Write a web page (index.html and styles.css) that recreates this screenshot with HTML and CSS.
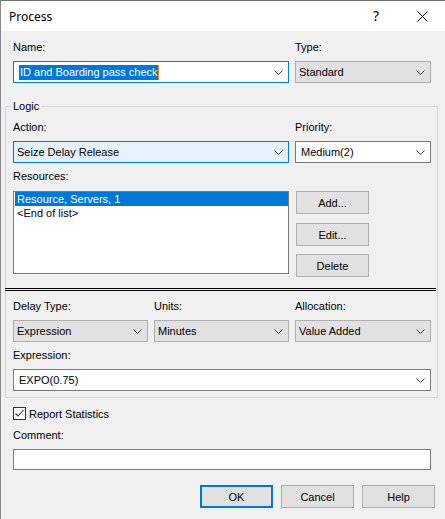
FILE: index.html
```html
<!DOCTYPE html>
<html>
<head>
<meta charset="utf-8">
<title>Process</title>
<link rel="stylesheet" href="styles.css">
</head>
<body>
<div class="window">
  <div class="titlebar">
    <span class="title">Process</span>
    <span class="tbtn help">?</span>
    <span class="tbtn close">
      <svg width="11" height="11" viewBox="0 0 11 11"><path d="M0.5 0.5 L10.5 10.5 M10.5 0.5 L0.5 10.5" stroke="#000" stroke-width="1" fill="none"/></svg>
    </span>
  </div>

  <div class="content">
    <div class="row2">
      <div class="field">
        <span class="lbl">Name:</span>
        <div class="combo focus edit">
          <span class="txt"><span class="sel">ID and Boarding pass check</span><span class="caret"></span></span>
          <svg class="chev" width="9" height="5" viewBox="0 0 9 5"><polyline points="0.5,0.5 4.5,4.5 8.5,0.5" fill="none" stroke="#404040" stroke-width="1"/></svg>
        </div>
      </div>
      <div class="field">
        <span class="lbl">Type:</span>
        <div class="combo ro">
          <span class="txt">Standard</span>
          <svg class="chev" width="9" height="5" viewBox="0 0 9 5"><polyline points="0.5,0.5 4.5,4.5 8.5,0.5" fill="none" stroke="#404040" stroke-width="1"/></svg>
        </div>
      </div>
    </div>

    <fieldset class="group">
      <legend>Logic</legend>
      <div class="row2">
        <div class="field">
          <span class="lbl">Action:</span>
          <div class="combo ro hot">
            <span class="txt">Seize Delay Release</span>
            <svg class="chev" width="9" height="5" viewBox="0 0 9 5"><polyline points="0.5,0.5 4.5,4.5 8.5,0.5" fill="none" stroke="#404040" stroke-width="1"/></svg>
          </div>
        </div>
        <div class="field">
          <span class="lbl">Priority:</span>
          <div class="combo edit">
            <span class="txt">Medium(2)</span>
            <svg class="chev" width="9" height="5" viewBox="0 0 9 5"><polyline points="0.5,0.5 4.5,4.5 8.5,0.5" fill="none" stroke="#404040" stroke-width="1"/></svg>
          </div>
        </div>
      </div>

      <div class="field res">
        <span class="lbl lbl-list">Resources:</span>
        <div class="resrow">
          <div class="list">
            <div class="item selected">Resource, Servers, 1</div>
            <div class="item">&lt;End of list&gt;</div>
          </div>
          <div class="sidebtns">
            <button class="btn">Add...</button>
            <button class="btn b-edit">Edit...</button>
            <button class="btn b-del">Delete</button>
          </div>
        </div>
      </div>

      <div class="dbl"></div>

      <div class="row3">
        <div class="field">
          <span class="lbl">Delay Type:</span>
          <div class="combo ro">
            <span class="txt">Expression</span>
            <svg class="chev" width="9" height="5" viewBox="0 0 9 5"><polyline points="0.5,0.5 4.5,4.5 8.5,0.5" fill="none" stroke="#404040" stroke-width="1"/></svg>
          </div>
        </div>
        <div class="field">
          <span class="lbl">Units:</span>
          <div class="combo ro">
            <span class="txt">Minutes</span>
            <svg class="chev" width="9" height="5" viewBox="0 0 9 5"><polyline points="0.5,0.5 4.5,4.5 8.5,0.5" fill="none" stroke="#404040" stroke-width="1"/></svg>
          </div>
        </div>
        <div class="field">
          <span class="lbl">Allocation:</span>
          <div class="combo ro">
            <span class="txt">Value Added</span>
            <svg class="chev" width="9" height="5" viewBox="0 0 9 5"><polyline points="0.5,0.5 4.5,4.5 8.5,0.5" fill="none" stroke="#404040" stroke-width="1"/></svg>
          </div>
        </div>
      </div>

      <div class="field expr">
        <span class="lbl">Expression:</span>
        <div class="combo edit">
          <span class="txt">EXPO(0.75)</span>
          <svg class="chev" width="9" height="5" viewBox="0 0 9 5"><polyline points="0.5,0.5 4.5,4.5 8.5,0.5" fill="none" stroke="#404040" stroke-width="1"/></svg>
        </div>
      </div>
    </fieldset>

    <label class="check">
      <svg class="cbox" width="13" height="13" viewBox="0 0 13 13"><rect x="0.5" y="0.5" width="12" height="12" fill="#fff" stroke="#333"/><polyline points="2.5,6.5 5,9 10.5,3" fill="none" stroke="#333" stroke-width="1.1"/></svg>
      <span>Report Statistics</span>
    </label>

    <div class="field comment">
      <span class="lbl">Comment:</span>
      <div class="textbox"></div>
    </div>

    <div class="footer">
      <button class="btn default">OK</button>
      <button class="btn">Cancel</button>
      <button class="btn">Help</button>
    </div>
  </div>
</div>
</body>
</html>
```

FILE: styles.css
```css
* { box-sizing: border-box; }

html, body {
  margin: 0;
  padding: 0;
}

body {
  width: 445px;
  height: 519px;
  overflow: hidden;
  background: #f0f0f0;
  font-family: "Liberation Sans", Arial, sans-serif;
  font-size: 11px;
  color: #000;
}

.window {
  height: 519px;
  border-top: 1px solid #707070;
  border-left: 1px solid #8a8a8a;
  background: #f0f0f0;
}

.titlebar {
  height: 30px;
  background: #fff;
  display: flex;
  align-items: center;
}

.title {
  flex: 1;
  padding-left: 8px;
  font-family: "Noto Sans", "Open Sans", sans-serif;
  font-size: 12px;
  color: #000;
}

.tbtn {
  width: 46px;
  height: 30px;
  display: flex;
  align-items: center;
  justify-content: center;
}

.help {
  font-family: "Noto Sans", sans-serif;
  font-size: 14px;
  font-weight: 400;
  padding-bottom: 1px;
}

.content {
  padding: 10px 14px 0 12px;
}

.lbl {
  display: block;
  height: 13px;
  line-height: 13px;
  margin-bottom: 7px;
  white-space: nowrap;
}

.lbl-list {
  margin-bottom: 8px;
}

.row2 {
  display: grid;
  grid-template-columns: 276px 136px;
  column-gap: 6px;
}

.row3 {
  display: grid;
  grid-template-columns: 135px 135px 136px;
  column-gap: 6px;
  margin-top: 9px;
}

.combo {
  height: 22px;
  border: 1px solid #7a7a7a;
  background: #fff;
  display: flex;
  align-items: center;
  padding-left: 3px;
}

.combo.edit {
  padding-left: 5px;
}

.combo.ro {
  background: #e1e1e1;
  border-color: #adadad;
}

.combo.focus {
  border-color: #0078d7;
}

.combo.hot {
  background: #e5f1fb;
  border-color: #0078d7;
}

.combo .txt {
  flex: 1;
  min-width: 0;
  white-space: nowrap;
  overflow: hidden;
  display: flex;
  align-items: center;
}

.sel {
  background: #0078d7;
  color: #fff;
  line-height: 15px;
  padding-left: 1px;
}

.caret {
  display: inline-block;
  width: 1px;
  height: 15px;
  background: #ff8800;
}

.chev {
  flex: none;
  margin: 1px 5px 0 4px;
}

.group {
  margin: 17px -7px 0 -8px;
  padding: 8px 6px 6px 7px;
  border: 1px solid #d6d6d6;
  min-width: 0;
}

.group legend {
  margin-left: -2px;
  padding: 0 2px;
  height: 13px;
  line-height: 13px;
}

.res {
  margin-top: 7px;
}

.resrow {
  display: flex;
  gap: 7px;
  align-items: flex-start;
}

.list {
  width: 276px;
  height: 83px;
  border: 1px solid #7a7a7a;
  background: #fff;
  padding: 0 0 0 1px;
}

.item {
  height: 14px;
  line-height: 14px;
  padding-left: 2px;
  white-space: nowrap;
}

.item.selected {
  background: #0078d7;
  color: #fff;
}

.sidebtns {
  display: flex;
  flex-direction: column;
}

.btn {
  width: 73px;
  height: 23px;
  padding: 0;
  margin: 0;
  border: 1px solid #adadad;
  background: #e1e1e1;
  font-family: "Liberation Sans", Arial, sans-serif;
  font-size: 11px;
  color: #000;
  display: flex;
  align-items: center;
  justify-content: center;
}

.b-edit {
  margin-top: 9px;
}

.b-del {
  margin-top: 8px;
}

.btn.default {
  border: 2px solid #0078d7;
}

.dbl {
  height: 3px;
  border-top: 1px solid #000;
  border-bottom: 1px solid #000;
  margin: 11px -5px 0 -8px;
}

.expr {
  margin-top: 7px;
}

.check {
  display: flex;
  align-items: center;
  gap: 3px;
  height: 13px;
  margin-top: 9px;
}

.cbox {
  flex: none;
}

.comment {
  margin-top: 9px;
}

.textbox {
  height: 21px;
  border: 1px solid #7a7a7a;
  background: #fff;
}

.footer {
  display: flex;
  justify-content: flex-end;
  gap: 8px;
  margin-top: 15px;
  margin-right: -4px;
}
```
